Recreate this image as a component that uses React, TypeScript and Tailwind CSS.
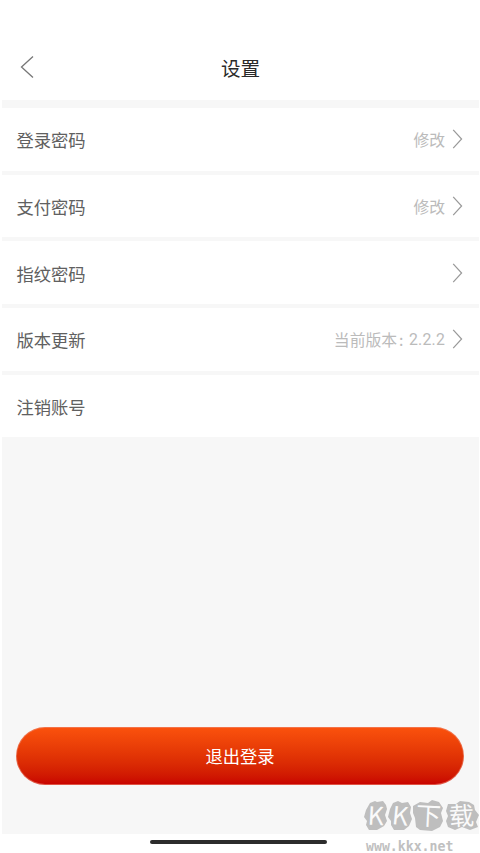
import React from "react";

const rows = [
  { label: "登录密码", value: "修改", arrow: true },
  { label: "支付密码", value: "修改", arrow: true },
  { label: "指纹密码", value: "", arrow: true },
  { label: "版本更新", prefix: "当前版本", value: "2.2.2", arrow: true },
  { label: "注销账号", value: "", arrow: false },
];

const Chevron = () => (
  <svg className="ml-[7px] mt-px h-5 w-[11px]" viewBox="0 0 11 20" fill="none" stroke="#999999" strokeWidth="1.2">
    <path d="M1.2 0.8 L9.6 10 L1.2 19.2" />
  </svg>
);

const Header = () => (
  <header className="relative flex h-[100px] shrink-0 items-end justify-center bg-white pb-[17px]">
    <button className="absolute bottom-[21px] left-[18px]" aria-label="返回">
      <svg className="h-6 w-[14px]" viewBox="0 0 14 24" fill="none" stroke="#777777" strokeWidth="1.3">
        <path d="M13 1.5 L1.5 12 L13 22.5" />
      </svg>
    </button>
    <h1 className="text-[19.6px] leading-[30px] text-[#2a2a2a]">设置</h1>
  </header>
);

const Watermark = () => (
  <div className="absolute left-[364px] top-[799px] w-[116px]">
    <div className="relative h-[34px]">
      <svg className="absolute inset-0" width="116" height="34" viewBox="0 0 116 34" fill="#bebebe">
        <path d="M6 4 L11 2 L13 3 L19 2 L22 6 L23 10 L21 16 L23 22 L20 27 L13 31 L5 31 L2 26 L3 22 L0 18 L2 11 Z" />
        <path d="M29 4 L34 2 L38 4 L44 3 L47 8 L46 14 L48 20 L45 27 L40 31 L30 31 L27 26 L27 22 L24 18 L26 10 Z" />
        <path d="M49 7 L56 3 L64 4 L68 1 L75 3 L79 9 L77 14 L79 22 L76 28 L68 32 L56 31 L52 28 L51 19 L49 14 Z" />
        <path d="M84 5 L92 5 L96 2 L105 3 L110 6 L111 11 L115 16 L112 23 L114 28 L106 31 L98 28 L91 31 L84 28 L82 22 L84 17 L82 12 Z" />
      </svg>
      <div className="relative -top-[2px] flex items-center text-[25px] leading-[34px] text-[#fafafa]">
        <span className="w-[24px] rotate-3 text-center">K</span>
        <span className="w-[25px] rotate-6 text-center">K</span>
        <span className="w-[31px] rotate-3 text-center">下</span>
        <span className="w-[35px] -rotate-3 text-center">载</span>
      </div>
    </div>
    <div className="ml-[2px] mt-[5px] whitespace-nowrap font-['DejaVu_Sans_Mono',monospace] text-[13.2px] font-bold leading-[18px] text-[#c0c0c0]">
      www.kkx.net
    </div>
  </div>
);

const App = () => {
  return (
    <div className="relative flex h-[853px] w-[480px] flex-col overflow-hidden bg-white pl-[2px] pr-px font-['Noto_Sans_CJK_SC',sans-serif]">
      <Header />
      <main className="flex h-[734px] shrink-0 flex-col bg-[#f7f7f7] pt-2">
        <div className="flex flex-col gap-1">
          {rows.map((row) => (
            <div key={row.label} className="flex h-[62.67px] items-center bg-white pl-[14.5px] pr-4 pb-px">
              <span className="flex-1 pt-[3px] text-[17.3px] text-[#606060]">{row.label}</span>
              <span className="flex pt-[3px] text-[15.8px] text-[#bbbbbb]">
                {row.prefix && (
                  <>
                    <span>{row.prefix}</span>
                    <span className="w-[12px] pl-[2px]">:</span>
                  </>
                )}
                <span className={row.prefix ? "font-['Roboto',sans-serif] leading-6 tracking-[0.2px]" : ""}>{row.value}</span>
              </span>
              {row.arrow && <Chevron />}
            </div>
          ))}
        </div>
        <button className="mb-[49px] ml-[14px] mr-[15px] mt-auto flex h-[58px] items-center justify-center rounded-full border border-[#ee8870]/60 bg-gradient-to-b from-[#fb520d] to-[#c80000] [background-origin:border-box] text-[17.3px] text-white">
          退出登录
        </button>
      </main>
      <div className="ml-[148px] mt-[6px] h-[4px] w-[177px] shrink-0 rounded-full bg-[#2c2c2c]" />
      <Watermark />
    </div>
  );
};

export default App;
